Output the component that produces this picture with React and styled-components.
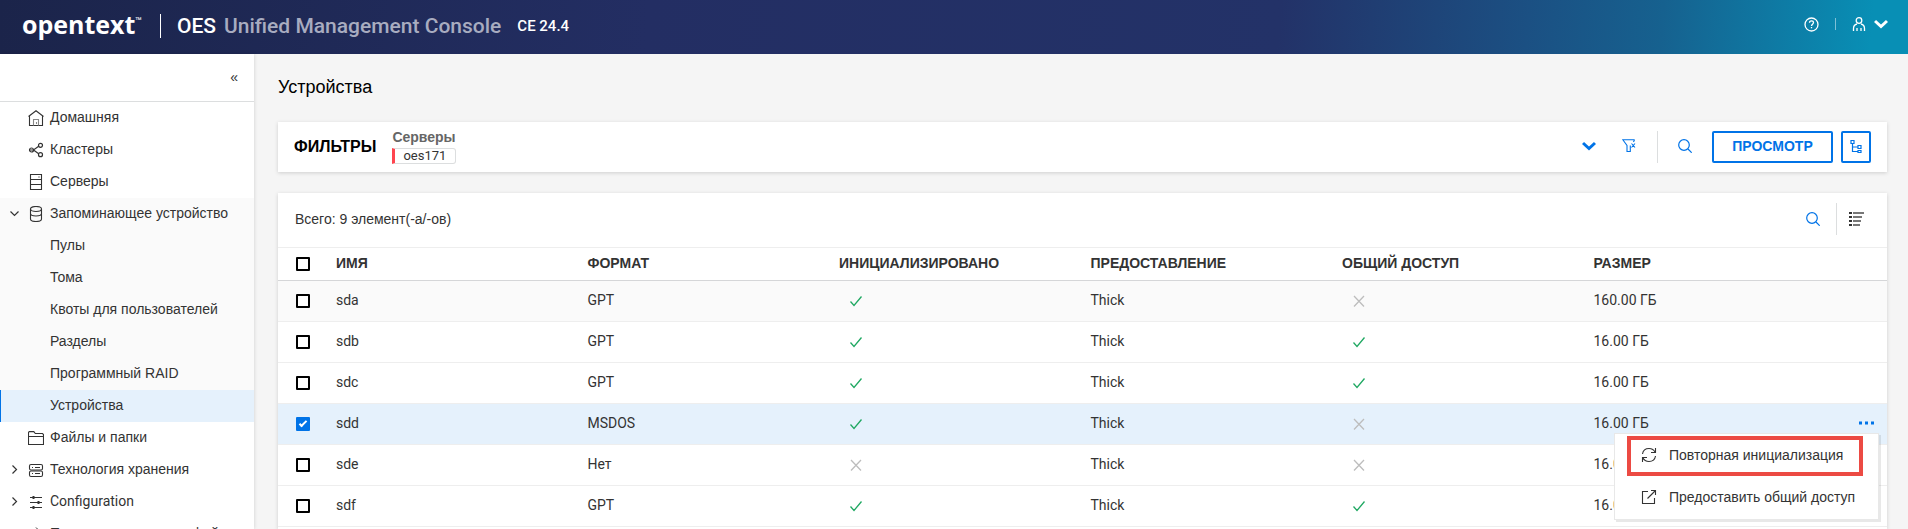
import React, { useState } from 'react';
import styled, { createGlobalStyle, css } from 'styled-components';

const sans = "'Liberation Sans', Arial, sans-serif";
const latin = "Roboto, 'Liberation Sans', sans-serif";
const blue = '#0073e7';

const GlobalStyle = createGlobalStyle`
  *, *::before, *::after { box-sizing: border-box; }
  body {
    margin: 0;
    background: #f5f5f5;
    color: #333;
    font: 14px/16px ${sans};
  }
  button { font: inherit; color: inherit; background: none; border: 0; padding: 0; cursor: pointer; }
  a { color: inherit; text-decoration: none; }
  ul { list-style: none; margin: 0; padding: 0; }
  svg { display: block; flex: none; }
`;

const Page = styled.div`
  display: flex;
  flex-direction: column;
  height: 100vh;
  overflow: hidden;
`;

/* ---------- header ---------- */

const TopBar = styled.header`
  flex: none;
  display: flex;
  align-items: center;
  height: 54px;
  padding: 0 20px 2px 22px;
  color: #fff;
  font-family: ${latin};
  background: linear-gradient(95deg, #1b244a 0%, #232e63 34%, #233268 67%, #1b5083 80%, #16618f 87%, #088fb5 98%);
`;

const Brand = styled.a`
  display: flex;
  align-items: flex-start;
  width: 122px;
  padding-bottom: 4px;
  font: 700 25px/28px 'Open Sans', sans-serif;
`;

const TradeMark = styled.span`
  font-size: 8px;
  line-height: 20px;
`;

const BrandRule = styled.span`
  width: 1px;
  height: 24px;
  margin: 0 16px;
  background: #fff;
`;

const Product = styled.h1`
  display: flex;
  gap: 8px;
  margin: 0;
  font-size: 21px;
  line-height: 24px;
  font-weight: 500;
`;

const ProductName = styled.span`
  color: #a8acc0;
`;

const Version = styled.span`
  margin-left: 16px;
  font-size: 15px;
  line-height: 24px;
  font-weight: 500;
`;

const TopActions = styled.div`
  display: flex;
  align-items: center;
  margin-left: auto;
  padding-bottom: 4px;
`;

const TopRule = styled.span`
  width: 1px;
  height: 12px;
  margin: 0 16px;
  background: #7fc0d6;
`;

const UserButton = styled.button`
  display: flex;
  align-items: center;
  gap: 8px;
`;

/* ---------- side navigation ---------- */

const Body = styled.div`
  flex: 1;
  display: flex;
  min-height: 0;
`;

const SideBar = styled.nav`
  flex: none;
  width: 254px;
  overflow: hidden;
  background: #fff;
  box-shadow: 0 0 4px rgba(0, 0, 0, 0.16);
`;

const CollapseRow = styled.div`
  display: flex;
  justify-content: flex-end;
  height: 48px;
  padding: 0 16px 2px;
  border-bottom: 1px solid #dcdedf;
`;

const NavItem = styled.a`
  display: flex;
  align-items: center;
  height: 32px;
  padding-left: ${(p) => (p.$child ? 50 : 6)}px;
  padding-bottom: 2px;
  font-family: ${(p) => (p.$latin ? latin : sans)};
  white-space: nowrap;
  background: ${(p) => (p.$shaded ? '#fafafa' : 'transparent')};
  ${(p) =>
    p.$active &&
    css`
      padding-left: 49px;
      border-left: 1px solid ${blue};
      background: #e5f1fc;
    `}
`;

const Expander = styled.span`
  display: flex;
  justify-content: center;
  width: 16px;
  margin-right: 6px;
`;

const NavIcon = styled.span`
  margin-right: 6px;
  padding-top: 2px;
`;

/* ---------- content ---------- */

const Content = styled.main`
  flex: 1;
  display: flex;
  flex-direction: column;
  min-width: 0;
  padding: 22px 21px 0 24px;
`;

const Title = styled.h2`
  margin: 0;
  height: 46px;
  color: #000;
  font-size: 18px;
  line-height: 22px;
  font-weight: 400;
`;

const Card = styled.section`
  background: #fff;
  box-shadow: 0 1px 4px rgba(0, 0, 0, 0.16);
`;

const FilterCard = styled(Card)`
  flex: none;
  display: flex;
  align-items: center;
  height: 50px;
  padding: 0 16px;
`;

const FilterTitle = styled.h3`
  margin: 0 16px 0 0;
  color: #000;
  font-size: 16px;
  line-height: 20px;
`;

const FilterGroup = styled.div`
  display: flex;
  flex-direction: column;
  gap: 3px;
  padding-bottom: 2px;
`;

const FilterLabel = styled.span`
  color: #666;
  font-weight: 700;
`;

const Chip = styled.span`
  padding: 0 8px;
  border: 1px solid #dcdedf;
  border-left: 3px solid #ff454f;
  border-radius: 0 3px 3px 0;
  font: 13px/14px ${latin};
`;

const Tools = styled.div`
  display: flex;
  align-items: center;
  margin-left: auto;
  color: ${blue};
`;

const FilterTools = styled(Tools)`
  gap: 20px;
`;

const FilterIcons = styled.div`
  display: flex;
  gap: 26px;
  padding: 0 1px 2px 0;
`;

const ToolButton = styled.button`
  padding-bottom: 2px;
`;

const Rule = styled.span`
  width: 1px;
  height: 32px;
  background: #dcdedf;
`;

const FilterButtons = styled.div`
  display: flex;
  gap: 8px;
`;

const OutlineButton = styled.button`
  display: flex;
  align-items: center;
  justify-content: center;
  height: 32px;
  min-width: ${(p) => (p.$text ? 121 : 30)}px;
  padding-bottom: 2px;
  border: 2px solid ${blue};
  border-radius: 2px;
  color: ${blue};
  font-weight: 700;
`;

const TableCard = styled(Card)`
  flex: 1 0 auto;
  margin-top: 21px;
`;

const TableBar = styled.div`
  display: flex;
  align-items: center;
  height: 55px;
  padding: 0 22px 2px 17px;
  border-bottom: 1px solid #eee;
`;

const BarTools = styled(Tools)`
  gap: 16px;
`;

const ListButton = styled.button`
  margin-left: -4px;
`;

const Table = styled.table`
  width: 100%;
  table-layout: fixed;
  border-collapse: separate;
  border-spacing: 0;
`;

const EdgeCol = styled.col`
  width: 50px;
`;

const HeadCell = styled.th`
  height: 33px;
  padding: 0 8px ${(p) => (p.$edge ? 0 : 2)}px ${(p) => (p.$edge ? 18 : 8)}px;
  border-bottom: 1px solid #d5d6d8;
  text-align: left;
`;

const Row = styled.tr`
  background: ${(p) => (p.$selected ? '#e5f1fc' : p.$hover ? '#fafafa' : '#fff')};
`;

const Cell = styled.td`
  height: 41px;
  padding: 0 8px 2px;
  border-bottom: 1px solid #eee;
  font-family: ${(p) => (p.$latin ? latin : sans)};
`;

const CheckCell = styled(Cell)`
  padding: 0 0 0 18px;
`;

const ActionCell = styled(Cell)`
  position: relative;
  padding: 0 0 0 22px;
  color: ${blue};
`;

const Mark = styled.span`
  display: block;
  padding: 2px 0 0 8px;
  color: ${(p) => (p.$on ? '#1fa862' : '#bdbdbd')};
`;

const CheckBox = styled.input.attrs({ type: 'checkbox' })`
  appearance: none;
  display: block;
  width: 14px;
  height: 14px;
  margin: 0;
  border: 2px solid #000;
  border-radius: 1px;
  background: #fff;
  &:checked {
    border-color: ${blue};
    background: ${blue};
  }
  &:checked::after {
    content: '';
    display: block;
    width: 4px;
    height: 8px;
    margin-left: 3px;
    border: solid #fff;
    border-width: 0 2px 2px 0;
    transform: rotate(45deg);
  }
`;

/* ---------- row menu ---------- */

const Menu = styled.div`
  position: absolute;
  z-index: 1;
  top: 29px;
  right: 8px;
  display: grid;
  gap: 2px;
  padding: 2px 15px 1px 12px;
  border: 1px solid #e8e8e8;
  background: #fff;
  box-shadow: 2px 2px 0 rgba(0, 0, 0, 0.09);
  color: #333;
`;

const MenuItem = styled.button`
  display: flex;
  align-items: center;
  gap: 12px;
  width: 236px;
  height: 40px;
  padding: 0 0 3px 10px;
  border: 4px solid ${(p) => (p.$marked ? '#ec4a43' : 'transparent')};
  white-space: nowrap;
`;

/* ---------- icons ---------- */

const Icon = ({ size = 16, w = 1, children }) => (
  <svg width={size} height={size} viewBox={`0 0 ${size} ${size}`} fill="none" stroke="currentColor" strokeWidth={w} aria-hidden="true">
    {children}
  </svg>
);

const icons = {
  home: (
    <Icon w={1.1}>
      <path d="M.5 6.500 8 .8l7.500 5.700M1.500 6v9.500h13V6" />
      <path d="M5.500 15.500v-6h5v6M8.500 12v2" stroke="#888" />
    </Icon>
  ),
  share: (
    <Icon w={1.2}>
      <circle cx="3.500" cy="8" r="2" />
      <circle cx="12.500" cy="3.300" r="2" />
      <circle cx="12.500" cy="12.700" r="2" />
      <path d="M1 8h4.500L10.700 4.200M5.500 8l5.200 3.800" />
    </Icon>
  ),
  server: (
    <Icon w={1.1}>
      <path d="M2.500.5h11v15h-11zM2.500 5.500h11M2.500 10.500h11" />
      <path d="M10 3h2" stroke="#888" />
    </Icon>
  ),
  storage: (
    <Icon w={1.1}>
      <ellipse cx="8" cy="3" rx="5.500" ry="2.500" />
      <path d="M2.500 3v10c0 1.400 2.500 2.500 5.500 2.500s5.500-1.100 5.500-2.500V3M2.500 7.500c0 1.400 2.500 2.500 5.500 2.500s5.500-1.100 5.500-2.500" />
    </Icon>
  ),
  folder: (
    <Icon w={1.1}>
      <path d="M.5 14.500v-12l.7-.9h4.600l1.500 1.900h7.200l1 1v10zM.5 6.500h15" />
    </Icon>
  ),
  tech: (
    <Icon w={1.1}>
      <rect x="1.500" y="2.500" width="13" height="5.500" rx="1.500" />
      <rect x="1.500" y="9" width="13" height="5.500" rx="1.500" />
      <path d="M4 5.500h1M7 5.500h5M4 11.500h1M7 11.500h5" />
    </Icon>
  ),
  sliders: (
    <Icon>
      <path d="M2 3.500h12M2 8.500h12M2 13.500h12" />
      <path d="M5.500 2v3M10.500 7v3M5.500 12v3" strokeWidth="2" />
    </Icon>
  ),
  redirect: (
    <Icon>
      <path d="M8 1.500 12 5.500v9H2.500M2 9l6-6" />
    </Icon>
  ),
  down: (
    <Icon size={9} w={1.2}>
      <path d="m.5 2.500 4 4 4-4" />
    </Icon>
  ),
  right: (
    <Icon size={9} w={1.2}>
      <path d="m2.500.5 4 4-4 4" />
    </Icon>
  ),
  help: (
    <Icon size={15} w={1.3}>
      <circle cx="7.500" cy="7.500" r="6.500" />
      <path d="M5.500 5.800c0-1.300.9-2 2-2s2 .8 2 1.800c0 1.600-2 1.600-2 3.400M7.500 10v1.300" />
    </Icon>
  ),
  user: (
    <Icon size={14} w={1.3}>
      <circle cx="7" cy="3.500" r="2.800" />
      <path d="M1.500 14v-2.500c0-2.500 1.500-4 3.500-4.500M12.500 14v-2.500C12.500 9 11 7.500 9 7M5 14v-3M9 14v-3" />
    </Icon>
  ),
  chevron: (
    <Icon size={14} w={3}>
      <path d="m1 4 6 5.500L13 4" />
    </Icon>
  ),
  filter: (
    <Icon size={14} w={1.1}>
      <path d="M12.700.7H.8L5 6.500v6h3.300v-6M9.500 4.500l3.500 4M13 4.500l-3.500 4M11.500 3l1-2.300" />
    </Icon>
  ),
  search: (
    <Icon size={14} w={1.2}>
      <circle cx="6" cy="6" r="5.300" />
      <path d="m10 10 3.700 3.700" />
    </Icon>
  ),
  tree: (
    <Icon size={14} w={1.2}>
      <path d="M2 1.500h3v3H2zM9 6.500h3v3H9zM9 11.500h3v2H9zM3.500 4.500v8H9M3.500 8H9" />
    </Icon>
  ),
  list: (
    <Icon size={16} w={2}>
      <path d="M0 2h3M0 6h3M0 10h3M0 14h3" stroke="#333" />
      <path d="M4 2h11M4 6h9M4 10h8M4 14h7" stroke="#777" />
    </Icon>
  ),
  check: (
    <Icon size={18} w={1.3}>
      <path d="m3.500 9.500 3.500 4 7.500-9" />
    </Icon>
  ),
  cross: (
    <Icon size={18} w={1.3}>
      <path d="m4 4 10 10.500M14 4 4 14.500" />
    </Icon>
  ),
  dots: (
    <Icon size={16} w={3}>
      <path d="M0 8h3M6 8h3M12 8h3" />
    </Icon>
  ),
  refresh: (
    <Icon size={16} w={1.1}>
      <path d="M14.500 1v4.500H10M14.300 5.500C13 2.800 10.700 1.500 8 1.500 4.700 1.500 2 3.800 1.500 7M1.500 15v-4.500H6M1.700 10.500c1.300 2.700 3.600 4 6.300 4 3.300 0 6-2.300 6.500-5.500" />
    </Icon>
  ),
  external: (
    <Icon size={16} w={1.1}>
      <path d="M7 2.500H1.500v12h12V9M10 1.500h4.500V6M14.500 1.500l-8 8" />
    </Icon>
  ),
};

/* ---------- data ---------- */

const navItems = [
  { label: 'Домашняя', icon: 'home' },
  { label: 'Кластеры', icon: 'share' },
  { label: 'Серверы', icon: 'server' },
  { label: 'Запоминающее устройство', icon: 'storage', arrow: 'down', shaded: true },
  { label: 'Пулы', child: true },
  { label: 'Тома', child: true },
  { label: 'Квоты для пользователей', child: true },
  { label: 'Разделы', child: true },
  { label: 'Программный RAID', child: true },
  { label: 'Устройства', child: true, active: true },
  { label: 'Файлы и папки', icon: 'folder' },
  { label: 'Технология хранения', icon: 'tech', arrow: 'right' },
  { label: 'Configuration', icon: 'sliders', arrow: 'right', latin: true },
  { label: 'Перенаправление на файлы', icon: 'redirect' },
];

const columns = ['ИМЯ', 'ФОРМАТ', 'ИНИЦИАЛИЗИРОВАНО', 'ПРЕДОСТАВЛЕНИЕ', 'ОБЩИЙ ДОСТУП', 'РАЗМЕР'];

const devices = [
  { name: 'sda', format: 'GPT', ready: true, shared: false, size: '160.00 ГБ', hover: true },
  { name: 'sdb', format: 'GPT', ready: true, shared: true, size: '16.00 ГБ' },
  { name: 'sdc', format: 'GPT', ready: true, shared: true, size: '16.00 ГБ' },
  { name: 'sdd', format: 'MSDOS', ready: true, shared: false, size: '16.00 ГБ' },
  { name: 'sde', format: 'Нет', ready: false, shared: false, size: '16.00 ГБ' },
  { name: 'sdf', format: 'GPT', ready: true, shared: true, size: '16.00 ГБ' },
];

const StateMark = ({ on }) => (
  <Mark $on={on} role="img" aria-label={on ? 'Да' : 'Нет'}>
    {on ? icons.check : icons.cross}
  </Mark>
);

function SideNav() {
  return (
    <SideBar>
      <CollapseRow>
        <button aria-label="Свернуть">«</button>
      </CollapseRow>
      <ul>
        {navItems.map((item) => (
          <li key={item.label}>
            <NavItem
              href="#"
              $child={item.child}
              $active={item.active}
              $latin={item.latin}
              $shaded={item.shaded || item.child}
            >
              {!item.child && <Expander>{item.arrow && icons[item.arrow]}</Expander>}
              {item.icon && <NavIcon>{icons[item.icon]}</NavIcon>}
              {item.label}
            </NavItem>
          </li>
        ))}
      </ul>
    </SideBar>
  );
}

function DeviceTable() {
  const [selected, setSelected] = useState('sdd');
  return (
    <Table>
      <colgroup>
        <EdgeCol />
        {columns.map((c) => (
          <col key={c} />
        ))}
        <EdgeCol />
      </colgroup>
      <thead>
        <tr>
          <HeadCell $edge>
            <CheckBox aria-label="Выбрать все" />
          </HeadCell>
          {columns.map((c) => (
            <HeadCell key={c}>{c}</HeadCell>
          ))}
          <HeadCell />
        </tr>
      </thead>
      <tbody>
        {devices.map((d) => {
          const on = d.name === selected;
          return (
            <Row key={d.name} $selected={on} $hover={d.hover}>
              <CheckCell>
                <CheckBox aria-label={d.name} checked={on} onChange={() => setSelected(on ? null : d.name)} />
              </CheckCell>
              <Cell $latin>{d.name}</Cell>
              <Cell $latin>{d.format}</Cell>
              <Cell>
                <StateMark on={d.ready} />
              </Cell>
              <Cell $latin>Thick</Cell>
              <Cell>
                <StateMark on={d.shared} />
              </Cell>
              <Cell $latin>{d.size}</Cell>
              <ActionCell>
                {on && (
                  <>
                    <button aria-label="Действия">{icons.dots}</button>
                    <Menu>
                      <MenuItem $marked>
                        {icons.refresh}
                        Повторная инициализация
                      </MenuItem>
                      <MenuItem>
                        {icons.external}
                        Предоставить общий доступ
                      </MenuItem>
                    </Menu>
                  </>
                )}
              </ActionCell>
            </Row>
          );
        })}
      </tbody>
    </Table>
  );
}

export default function App() {
  return (
    <Page>
      <GlobalStyle />
      <TopBar>
        <Brand href="#">
          opentext<TradeMark>™</TradeMark>
        </Brand>
        <BrandRule />
        <Product>
          OES <ProductName>Unified Management Console</ProductName>
        </Product>
        <Version>CE 24.4</Version>
        <TopActions>
          <button aria-label="Справка">{icons.help}</button>
          <TopRule />
          <UserButton aria-label="Профиль">
            {icons.user}
            {icons.chevron}
          </UserButton>
        </TopActions>
      </TopBar>
      <Body>
        <SideNav />
        <Content>
          <Title>Устройства</Title>
          <FilterCard>
            <FilterTitle>ФИЛЬТРЫ</FilterTitle>
            <FilterGroup>
              <FilterLabel>Серверы</FilterLabel>
              <Chip>oes171</Chip>
            </FilterGroup>
            <FilterTools>
              <FilterIcons>
                <button aria-label="Развернуть">{icons.chevron}</button>
                <button aria-label="Сбросить фильтры">{icons.filter}</button>
              </FilterIcons>
              <Rule />
              <ToolButton aria-label="Поиск">{icons.search}</ToolButton>
              <FilterButtons>
                <OutlineButton $text>ПРОСМОТР</OutlineButton>
                <OutlineButton aria-label="Дерево">{icons.tree}</OutlineButton>
              </FilterButtons>
            </FilterTools>
          </FilterCard>
          <TableCard>
            <TableBar>
              Всего: 9 элемент(-а/-ов)
              <BarTools>
                <button aria-label="Поиск в таблице">{icons.search}</button>
                <Rule />
                <ListButton aria-label="Столбцы">{icons.list}</ListButton>
              </BarTools>
            </TableBar>
            <DeviceTable />
          </TableCard>
        </Content>
      </Body>
    </Page>
  );
}
